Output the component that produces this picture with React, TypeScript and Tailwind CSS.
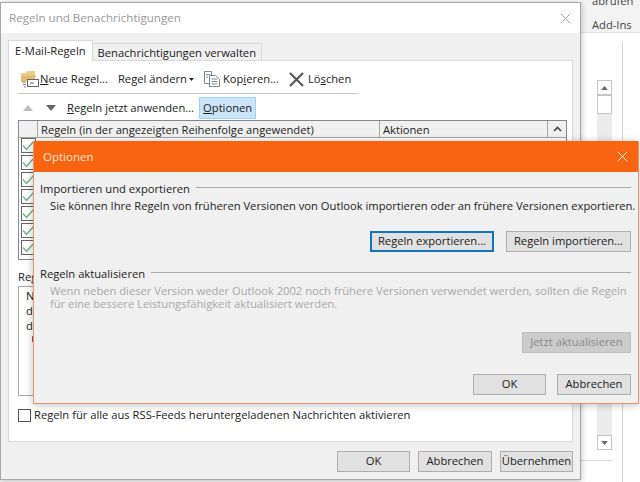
/**
 * Outlook rules dialog with the options dialog on top
 */

const font = { fontFamily: '"Open Sans", "Noto Sans", sans-serif' };

function Btn({ label, w, focused }: { label: string; w: string; focused?: boolean }) {
  return (
    <div
      className={`h-[21px] flex items-center justify-center bg-[#e1e1e1] text-[11.2px] text-[#222] whitespace-nowrap ${w} ${
        focused ? 'border-2 border-[#0f74c4]' : 'border border-[#adadad]'
      }`}
    >
      {label}
    </div>
  );
}

function Arrow({ up, className = '' }: { up?: boolean; className?: string }) {
  return (
    <svg width="10" height="6" viewBox="0 0 10 6" className={className}>
      <path d={up ? 'M0 6 L5 0 L10 6 Z' : 'M0 0 L10 0 L5 6 Z'} fill="currentColor" />
    </svg>
  );
}

function FolderIcon() {
  return (
    <svg width="18" height="18" viewBox="0 0 18 18" className="block">
      <path d="M0 3 L5 3 L6 1 L14 1 L14 6 L0 8 Z" fill="#eccb8f" />
      <path d="M0 6 L15 5 L14 10 L0 12 Z" fill="#e6b96f" />
      <rect x="6.5" y="9.5" width="11" height="7" fill="#fff" stroke="#666" />
      <path d="M9 13 H13" stroke="#666" />
      <path d="M1 12 H5 M2 14.5 H5 M3 17 H5" stroke="#888" />
    </svg>
  );
}

function CopyIcon() {
  return (
    <svg width="16" height="16" viewBox="0 0 16 16" fill="#fff" stroke="#7d8a99" className="block">
      <path d="M0.5 0.5 H7.5 V12.5 H0.5 Z" />
      <path d="M5.5 4.5 H11.5 L15.5 8 V15.5 H5.5 Z" />
      <path d="M2 3.5 H6 M2 6 H4 M7.5 8 H13.5 M7.5 10.5 H13.5 M7.5 13 H13.5" strokeWidth="1" />
    </svg>
  );
}

function CrossIcon({ size, color, width }: { size: number; color: string; width: number }) {
  return (
    <svg width={size} height={size} viewBox="0 0 16 16" className="block">
      <path d="M1 1 L15 15 M15 1 L1 15" stroke={color} strokeWidth={width} fill="none" />
    </svg>
  );
}

function RowCheck() {
  return (
    <div className="w-[15px] h-[15px] border border-[#666] bg-white flex items-center justify-center">
      <svg width="13" height="11" viewBox="0 0 13 11">
        <path d="M1 5.5 L4.5 9.5 L12 1" stroke="#62b884" strokeWidth="1.3" fill="none" />
      </svg>
    </div>
  );
}

function GroupHead({ label }: { label: string }) {
  return (
    <div className="flex items-center gap-[6px] text-[11.2px] text-[#222] leading-[16px]">
      <span className="whitespace-nowrap">{label}</span>
      <div className="flex-1 h-px bg-[#a9a9a9] -mt-[3px]" />
    </div>
  );
}

function Backdrop() {
  return (
    <div className="absolute inset-0 bg-white flex flex-col items-end">
      <div className="w-[59px] h-[33px] bg-[#f3f3f3] pl-[11px] text-[11.2px] text-[#444] border-b border-[#e2e2e2]">
        <div className="-mt-[7px] leading-[16px]">abrufen</div>
        <div className="mt-[8px] leading-[16px]">Add-Ins</div>
      </div>
      <div className="w-[59px] flex-1 flex">
        <div className="w-[32px] flex flex-col">
          <div className="ml-[16px] w-[15px] h-[370px] mt-[47px] bg-[#ececec] flex flex-col justify-between">
            <div>
              <div className="h-[15px] border border-[#c4c4c4] bg-white flex items-center justify-center text-[#666]">
                <Arrow up className="w-[7px] h-[4px]" />
              </div>
              <div className="h-[19px] border border-[#c4c4c4] bg-white" />
            </div>
            <div className="h-[15px] border border-[#c4c4c4] bg-white flex items-center justify-center text-[#666]">
              <Arrow className="w-[7px] h-[4px]" />
            </div>
          </div>
          <div className="h-px mt-[10px] bg-[#dcdcdc]" />
        </div>
        <div className="w-px ml-[9px] mt-[9px] bg-[#d2d2d2]" />
      </div>
    </div>
  );
}

function RulesDialog() {
  return (
    <div className="absolute left-0 top-[2px] w-[581px] h-[478px] bg-[#f0f0f0] border border-[#a8a8a8] shadow-[0_1px_6px_rgba(0,0,0,0.3)] flex flex-col">
      <div className="h-[30px] bg-white flex items-center justify-between pl-[8px] pr-[9px] shrink-0">
        <span className="text-[11.6px] text-[#9a9a9a]">Regeln und Benachrichtigungen</span>
        <CrossIcon size={11} color="#9a9a9a" width={1.3} />
      </div>
      <div className="flex flex-col flex-1 px-[7px] pt-[8px]">
        <div className="flex items-end h-[20px] relative z-10">
          <div className="h-[21px] px-[6px] bg-white border border-[#d9d9d9] border-b-0 text-[11.2px] text-[#222] leading-[19px] whitespace-nowrap">
            E-Mail-Regeln
          </div>
          <div className="h-[18px] px-[5px] bg-[#f0f0f0] border border-[#d9d9d9] border-l-0 text-[11.2px] text-[#222] leading-[17px] whitespace-nowrap">
            Benachrichtigungen verwalten
          </div>
        </div>
        <div className="h-[382px] -mt-px bg-white border border-[#d9d9d9] pl-[9px] pr-[5px] flex flex-col text-[11.2px] text-[#222] whitespace-nowrap">
          <div className="w-[341px] h-[33px] border-b border-[#c8c8c8] flex items-center pt-[4px]">
            <span className="ml-[3px]"><FolderIcon /></span>
            <span className="ml-[1px]"><u>N</u>eue Regel...</span>
            <span className="ml-[10px]">Re<u>g</u>el ändern</span>
            <Arrow className="w-[5px] h-[3px] ml-[2px]" />
            <span className="ml-[10px]"><CopyIcon /></span>
            <span className="ml-[3px]">Kop<u>i</u>eren...</span>
            <span className="ml-[10px]"><CrossIcon size={15} color="#555" width={2.2} /></span>
            <span className="ml-[4px]">Lö<u>s</u>chen</span>
          </div>
          <div className="h-[24px] flex items-center mt-[2px]">
            <Arrow up className="ml-[5px] text-[#bdbdbd]" />
            <Arrow className="ml-[13px] text-[#666]" />
            <span className="ml-[11px]"><u>R</u>egeln jetzt anwenden...</span>
            <span className="ml-[5px] h-[22px] px-[3px] leading-[20px] bg-[#cce4f7] border border-[#99d1ff]"><u>O</u>ptionen</span>
          </div>
          <div className="w-[549px] h-[140px] border border-[#828790] flex flex-col">
            <div className="h-[17px] flex bg-[#f0f0f0] border-b border-[#a8a8a8] leading-[17px]">
              <div className="w-[19px] border-r border-[#a8a8a8]" />
              <div className="w-[342px] pl-[3px] border-r border-[#a8a8a8]">Regeln (in der angezeigten Reihenfolge angewendet)</div>
              <div className="flex-1 pl-[3px] border-r border-[#a8a8a8]">Aktionen</div>
              <div className="w-[18px] flex items-center justify-center">
                <svg width="9" height="6" viewBox="0 0 9 6">
                  <path d="M1 5 L4.5 1.5 L8 5" stroke="#444" strokeWidth="1.6" fill="none" />
                </svg>
              </div>
            </div>
            <div className="flex flex-col gap-[2px] pl-[2px]">
              {[0, 1, 2, 3, 4, 5, 6].map((i) => (
                <RowCheck key={i} />
              ))}
            </div>
          </div>
          <div className="leading-[16px] mt-[9px]">Regelbeschreibung</div>
          <div className="w-[549px] h-[110px] mt-px border border-[#a8a8a8] pl-[7px] pt-[1px] leading-[15px]">
            <div>N</div>
            <div>d</div>
            <div>d</div>
            <div className="ml-[6px] mt-[3px] w-[2px] h-[6px] bg-[#c44]" />
          </div>
          <div className="flex items-center mt-[12px] h-[15px]">
            <div className="w-[13px] h-[13px] border border-[#555] bg-white" />
            <span className="ml-[3px]">Regeln für alle aus RSS-Feeds heruntergeladenen Nachrichten aktivieren</span>
          </div>
        </div>
        <div className="flex justify-end gap-[8px] mt-[9px]">
          <Btn label="OK" w="w-[73px]" />
          <Btn label="Abbrechen" w="w-[74px]" />
          <Btn label="Übernehmen" w="w-[73px]" />
        </div>
      </div>
    </div>
  );
}

function OptionsDialog() {
  return (
    <div className="absolute left-[33px] top-[141px] w-[606px] h-[263px] bg-[#f0f0f0] border border-t-0 border-[#e8946a] shadow-[0_1px_8px_rgba(0,0,0,0.25)] flex flex-col">
      <div className="h-[31px] bg-[#f96410] flex items-center justify-between pl-[9px] pr-[10px] shrink-0">
        <span className="text-[11.5px] text-[#ffe6d6]">Optionen</span>
        <CrossIcon size={11} color="#fff" width={1.4} />
      </div>
      <div className="flex flex-col pl-[6px] pr-[7px] pt-[9px] text-[11.2px] text-[#222]">
        <GroupHead label="Importieren und exportieren" />
        <p className="pl-[10px] leading-[16px] whitespace-nowrap mt-[1px]">
          Sie können Ihre Regeln von früheren Versionen von Outlook importieren oder an frühere Versionen exportieren.
        </p>
        <div className="flex justify-end gap-[12px] mt-[17px]">
          <Btn label="Regeln exportieren..." w="w-[124px]" focused />
          <Btn label="Regeln importieren..." w="w-[125px]" />
        </div>
        <div className="mt-[14px]">
          <GroupHead label="Regeln aktualisieren" />
        </div>
        <p className="pl-[10px] leading-[13px] text-[#a8a8a8] mt-[2px]">
          Wenn neben dieser Version weder Outlook 2002 noch frühere Versionen verwendet werden, sollten die Regeln
          <br />
          für eine bessere Leistungsfähigkeit aktualisiert werden.
        </p>
        <div className="flex justify-end mt-[22px]">
          <div className="w-[109px] h-[21px] bg-[#cccccc] border border-[#bfbfbf] text-[#8a8a8a] flex items-center justify-center">
            Jetzt aktualisieren
          </div>
        </div>
        <div className="flex justify-end gap-[11px] mt-[21px]">
          <Btn label="OK" w="w-[73px]" />
          <Btn label="Abbrechen" w="w-[74px]" />
        </div>
      </div>
    </div>
  );
}

export default function App() {
  return (
    <div className="relative w-[640px] h-[482px] overflow-hidden bg-white" style={font}>
      <Backdrop />
      <RulesDialog />
      <OptionsDialog />
    </div>
  );
}
